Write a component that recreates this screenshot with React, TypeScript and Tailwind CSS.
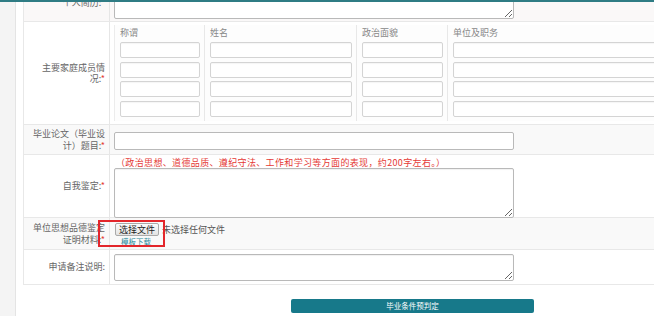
import React from "react";

const Req = () => <span className="text-[#e53935]">*</span>;

function Label({ children }: { children: React.ReactNode }) {
  return (
    <div className="w-[86px] shrink-0 border-r border-[#e6e6e6] flex items-center justify-end text-right pr-[4px] text-[9px] leading-[11.5px] text-[#666]">
      <div>{children}</div>
    </div>
  );
}

function Input() {
  return (
    <div className="h-[16px] w-full bg-white border border-[#d4d4d4] rounded-[2px] shadow-[inset_0_1px_1px_rgba(0,0,0,0.04)] mb-[3.5px]" />
  );
}

function TextArea({ h }: { h: string }) {
  return (
    <textarea
      readOnly
      className={`block w-[400px] ${h} bg-white border border-[#b9b9b9] rounded-[2px] shadow-[inset_0_1px_1px_rgba(0,0,0,0.06)] resize-y outline-none`}
    />
  );
}

const columns = [
  { title: "称谓", w: "w-[90px]" },
  { title: "姓名", w: "w-[152px]" },
  { title: "政治面貌", w: "w-[91px]" },
  { title: "单位及职务", w: "w-[230px]" },
];

export default function App() {
  return (
    <div className="relative w-[654px] h-[316px] overflow-hidden bg-white font-['Noto_Sans_CJK_SC','Noto_Sans',sans-serif]">
      <div className="absolute top-0 left-0 right-0 h-[2px] bg-[#2f7c84] z-10" />
      <div className="flex h-full">
        <div className="w-[16px] shrink-0 bg-[#f4f4f4] border-r border-[#e4e4e4]" />
        <div className="pl-[7px] flex-1 min-w-0">
          <div className="-mt-[16px] w-[720px] border-l border-[#e8e8e8]">
            {/* 个人简历 */}
            <div className="flex h-[38px] bg-[#faf8f8] border-b border-[#e8e8e8]">
              <Label>
                个人简历:<Req />
              </Label>
              <div className="pl-[4px] pt-[4px]">
                <TextArea h="h-[31px]" />
              </div>
            </div>

            {/* 主要家庭成员情况 */}
            <div className="flex h-[103px] bg-white border-b border-[#e8e8e8]">
              <Label>
                主要家庭成员情
                <br />
                况:<Req />
              </Label>
              <div className="pl-[4px] pt-[3px]">
                <div className="flex border-l border-[#ececec] bg-[#fdfdfd]">
                  {columns.map((c, i) => (
                    <div
                      key={c.title}
                      className={`${c.w} ${i < 3 ? "border-r border-[#e8e8e8]" : ""} pl-[5px] pr-[4px] pb-[1px]`}
                    >
                      <div className="h-[17px] text-[9px] leading-[16px] text-[#888]">{c.title}</div>
                      <Input />
                      <Input />
                      <Input />
                      <Input />
                    </div>
                  ))}
                </div>
              </div>
            </div>

            {/* 毕业论文 */}
            <div className="flex h-[30px] bg-[#f9f9f9] border-b border-[#e8e8e8]">
              <Label>
                毕业论文（毕业设
                <br />
                计）题目:<Req />
              </Label>
              <div className="pl-[4px] pt-[7px]">
                <div className="w-[400px] h-[18px] bg-white border border-[#b9b9b9] rounded-[2px]" />
              </div>
            </div>

            {/* 自我鉴定 */}
            <div className="flex h-[63px] bg-white border-b border-[#e8e8e8]">
              <Label>
                自我鉴定:<Req />
              </Label>
              <div className="pl-[4px] pt-[3px]">
                <div className="text-[9px] leading-[10px] tracking-[0.35px] text-[#e53935] pl-[2px] h-[9px] mb-[1px] whitespace-nowrap">
                  （政治思想、道德品质、遵纪守法、工作和学习等方面的表现，约200字左右。）
                </div>
                <TextArea h="h-[50px]" />
              </div>
            </div>

            {/* 单位思想品德鉴定 */}
            <div className="relative flex h-[32px] bg-[#f9f9f9] border-b border-[#e8e8e8]">
              <Label>
                单位思想品德鉴定
                <br />
                证明材料:<Req />
              </Label>
              <div className="pl-[5px] pt-[5px]">
                <div className="flex items-center">
                  <button className="h-[13px] px-[3px] border border-[#a9a9a9] rounded-[2px] bg-gradient-to-b from-[#fbfbfb] to-[#e3e3e3] text-[9px] leading-[11px] text-[#222]">
                    选择文件
                  </button>
                  <span className="ml-[3px] text-[9px] leading-[11px] text-[#555]">未选择任何文件</span>
                </div>
                <div className="ml-[6px] mt-[1px] text-[7.5px] leading-[9px] text-[#2a8a9a]">模板下载</div>
              </div>
              <div className="absolute left-[74px] top-[2px] w-[67px] h-[27px] border-2 border-[#e3262b]" />
            </div>

            {/* 申请备注说明 */}
            <div className="flex h-[35px] bg-white border-b border-[#e8e8e8]">
              <Label>申请备注说明:</Label>
              <div className="pl-[4px] pt-[4px]">
                <TextArea h="h-[27px]" />
              </div>
            </div>
          </div>

          <div className="flex pl-[268px] pt-[14px]">
            <button className="block w-[243px] h-[14px] bg-[#17798a] rounded-[2px] text-white text-[7.5px] leading-[14px] text-center">
              毕业条件预判定
            </button>
          </div>
        </div>
      </div>
    </div>
  );
}
